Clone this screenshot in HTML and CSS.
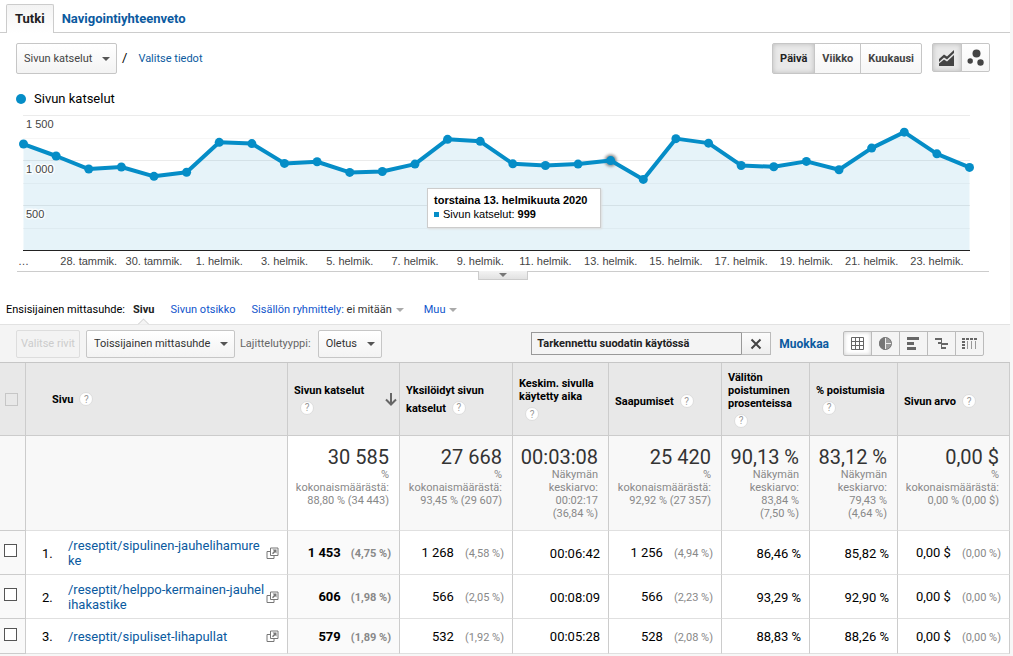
FILE: index.html
```html
<!DOCTYPE html>
<html lang="fi">
<head>
<meta charset="utf-8">
<title>Sivut – Tutki</title>
<meta name="viewport" content="width=device-width, initial-scale=1">
<link rel="stylesheet" href="styles.css">
</head>
<body>
<svg class="symbols" aria-hidden="true">
  <symbol id="popout" viewBox="0 0 13 13">
    <path d="M4.500 4.500H1V11.500H8V8.500" fill="none" stroke="#777" stroke-linejoin="round"/>
    <path d="M4.500 1H12V8.500H4.500Z" fill="#fff" stroke="#777" stroke-linejoin="round"/>
    <path d="M6.500 2.500H10.500V6.500L9.200 5.200L7 7.200L6 6.200L8 4Z" fill="#777"/>
  </symbol>
</svg>
<main class="panel">
  <nav class="tabs">
    <a class="tab tab-active" href="#tutki">Tutki</a>
    <a class="tab" href="#navigointi">Navigointiyhteenveto</a>
  </nav>

  <section class="controls">
    <span class="select select-tall"><select aria-label="Tieto"><option>Sivun katselut</option></select></span>
    <span class="slash">/</span>
    <a class="pick" href="#tiedot">Valitse tiedot</a>
    <div class="group periods">
      <button class="on" type="button">Päivä</button><button type="button">Viikko</button><button type="button">Kuukausi</button>
    </div>
    <div class="group charts">
      <button class="on" type="button" aria-label="Viivakaavio">
        <svg width="16" height="16" viewBox="0 0 16 16"><path d="M0 9L5 4.500L8 6.500L15 0V3L8 9.500L5 7.500L0 12Z" fill="#444"/><path d="M0 16V13.500L5 9.500L8 11.500L15 5V16Z" fill="#444"/></svg>
      </button><button type="button" aria-label="Liikekaavio">
        <svg width="18" height="17" viewBox="0 0 18 17"><circle cx="9.500" cy="4.500" r="4" fill="#444"/><circle cx="3.200" cy="12" r="2.700" fill="#444"/><circle cx="13.500" cy="13.500" r="3.200" fill="#444"/></svg>
      </button>
    </div>
  </section>

  <div class="legend"><i class="dot"></i>Sivun katselut</div>

  <section class="chart">
    <svg viewBox="0 110 1010 162" role="img" aria-label="Sivun katselut päivittäin">
      <defs><filter id="glow" x="-100%" y="-100%" width="300%" height="300%"><feGaussianBlur stdDeviation="1.500"/></filter></defs>
      <g stroke="#ebebeb"><path d="M23 115.500H970M23 160.500H970M23 205.500H970"/></g>
      <g stroke="#f6f6f6"><path d="M23 138.500H970M23 183.500H970M23 228.500H970"/></g>
      <g id="series"></g>
      <path d="M23 250.500H970" stroke="#222"/>
      <path d="M17 271.500H989" stroke="#ccc"/>
      <g class="scale"><text x="26" y="128">1 500</text><text x="26" y="173">1 000</text><text x="26" y="218">500</text></g>
      <g class="dates" id="dates"></g>
    </svg>
    <div class="tip" role="tooltip"><b>torstaina 13. helmikuuta 2020</b><span><i class="square"></i>Sivun katselut: <b>999</b></span></div>
    <button class="handle" type="button" aria-label="Pienennä kaavio"></button>
  </section>

  <section class="dimensions">
    <span>Ensisijainen mittasuhde:</span>
    <b class="current">Sivu</b>
    <a href="#otsikko">Sivun otsikko</a>
    <span class="grouping"><a href="#ryhmittely">Sisällön ryhmittely:</a> <span class="caret">ei mitään</span></span>
    <a class="caret" href="#muu">Muu</a>
  </section>

  <section class="toolbar">
    <button class="rows-button" type="button" disabled>Valitse rivit</button>
    <span class="select"><select aria-label="Toissijainen mittasuhde"><option>Toissijainen mittasuhde</option></select></span>
    <label class="sort-label" for="sort">Lajittelutyyppi:</label>
    <span class="select"><select id="sort"><option>Oletus</option></select></span>
    <div class="filter">
      <input type="text" aria-label="Suodatin" value="Tarkennettu suodatin käytössä">
      <button type="button" aria-label="Poista suodatin"><svg width="12" height="12" viewBox="0 0 12 12"><path d="M1.500 1.500L10.500 10.500M10.500 1.500L1.500 10.500" stroke="#444" stroke-width="2"/></svg></button>
    </div>
    <a class="edit" href="#muokkaa">Muokkaa</a>
    <div class="group views">
      <button class="on" type="button" aria-label="Taulukko"><svg width="13" height="13" viewBox="0 0 13 13"><path d="M.5 .5H12.500V12.500H.5ZM.5 4.500H12.500M.5 8.500H12.500M4.500 .5V12.500M8.500 .5V12.500" fill="none" stroke="#666"/></svg></button><button type="button" aria-label="Prosenttiosuus"><svg width="13" height="13" viewBox="0 0 13 13"><circle cx="6.500" cy="6.500" r="6" fill="#999" stroke="#777"/><path d="M6.500 0A6.500 6.500 0 0 0 6.500 13Z" fill="#777"/><path d="M6.500 1V12M7 6.500H12" stroke="#eee"/></svg></button><button type="button" aria-label="Tehokkuus"><svg width="13" height="13" viewBox="0 0 13 13"><path d="M0 1.500H12M0 6.500H7M0 11.500H9" stroke="#666" stroke-width="3"/></svg></button><button type="button" aria-label="Vertailu"><svg width="13" height="13" viewBox="0 0 13 13"><path d="M0 2H6M3 6H6M6 7H13M6 11H11" stroke="#666" stroke-width="2"/><path d="M6.500 1V12" stroke="#666"/></svg></button><button type="button" aria-label="Pivot"><svg width="15" height="13" viewBox="0 0 15 13"><path d="M0 2H15" stroke="#666" stroke-width="2" stroke-dasharray="3 1"/><path d="M0 5H3M0 8H3M0 11H3" stroke="#666" stroke-width="2"/><path d="M5.500 4V12M9.500 4V12M13.500 4V12" stroke="#999"/></svg></button>
    </div>
  </section>

  <table class="report">
    <colgroup><col class="c-check"><col><col class="c-views"><col class="c-wide"><col class="c-time"><col class="c-wide"><col class="c-rate"><col class="c-rate"><col class="c-views"></colgroup>
    <thead>
      <tr>
        <th class="check"><input type="checkbox" aria-label="Valitse kaikki" disabled></th>
        <th class="page">Sivu<i class="help">?</i></th>
        <th class="sorted"><div class="sort-head"><span>Sivun katselut<wbr><i class="help">?</i></span><svg width="12" height="13" viewBox="0 0 12 13"><path d="M6 0V11.500M1 6.500L6 11.500L11 6.500" fill="none" stroke="#666" stroke-width="2"/></svg></div></th>
        <th>Yksilöidyt sivun katselut<i class="help">?</i></th>
        <th>Keskim. sivulla käytetty aika<wbr><i class="help">?</i></th>
        <th>Saapumiset<i class="help">?</i></th>
        <th>Välitön poistuminen prosenteissa<wbr><i class="help">?</i></th>
        <th>% poistumisia<wbr><i class="help">?</i></th>
        <th>Sivun arvo<i class="help">?</i></th>
      </tr>
    </thead>
    <tbody>
      <tr class="totals">
        <td class="check"></td>
        <td></td>
        <td class="sorted"><strong>30 585</strong>% kokonaismäärästä: 88,80&nbsp;% (34&nbsp;443)</td>
        <td><strong>27 668</strong>% kokonaismäärästä: 93,45&nbsp;% (29&nbsp;607)</td>
        <td><strong>00:03:08</strong>Näkymän keskiarvo: 00:02:17 (36,84&nbsp;%)</td>
        <td><strong>25 420</strong>% kokonaismäärästä: 92,92&nbsp;% (27&nbsp;357)</td>
        <td><strong>90,13 %</strong>Näkymän keskiarvo: 83,84&nbsp;% (7,50&nbsp;%)</td>
        <td><strong>83,12 %</strong>Näkymän keskiarvo: 79,43&nbsp;% (4,64&nbsp;%)</td>
        <td><strong>0,00 $</strong>% kokonaismäärästä: 0,00&nbsp;% (0,00&nbsp;$)</td>
      </tr>
      <tr>
        <td class="check"><input type="checkbox" aria-label="Valitse rivi 1"></td>
        <td class="page"><div class="entry"><span>1.</span><a href="#r1">/reseptit/sipulinen-jauhelihamureke</a><svg class="popout" width="13" height="13"><use href="#popout"/></svg></div></td>
        <td class="sorted">1 453<small>(4,75 %)</small></td><td>1 268<small>(4,58 %)</small></td><td>00:06:42</td><td>1 256<small>(4,94 %)</small></td><td>86,46 %</td><td>85,82 %</td><td>0,00 $<small>(0,00 %)</small></td>
      </tr>
      <tr>
        <td class="check"><input type="checkbox" aria-label="Valitse rivi 2"></td>
        <td class="page"><div class="entry"><span>2.</span><a href="#r2">/reseptit/helppo-kermainen-jauhelihakastike</a><svg class="popout" width="13" height="13"><use href="#popout"/></svg></div></td>
        <td class="sorted">606<small>(1,98 %)</small></td><td>566<small>(2,05 %)</small></td><td>00:08:09</td><td>566<small>(2,23 %)</small></td><td>93,29 %</td><td>92,90 %</td><td>0,00 $<small>(0,00 %)</small></td>
      </tr>
      <tr>
        <td class="check"><input type="checkbox" aria-label="Valitse rivi 3"></td>
        <td class="page"><div class="entry"><span>3.</span><a href="#r3">/reseptit/sipuliset-lihapullat</a><svg class="popout" width="13" height="13"><use href="#popout"/></svg></div></td>
        <td class="sorted">579<small>(1,89 %)</small></td><td>532<small>(1,92 %)</small></td><td>00:05:28</td><td>528<small>(2,08 %)</small></td><td>88,83 %</td><td>88,26 %</td><td>0,00 $<small>(0,00 %)</small></td>
      </tr>
    </tbody>
  </table>
</main>
<script src="chart.js"></script>
</body>
</html>
```

FILE: chart.js
```js
// Daily page views from 26 January to 24 February.
const views = [1183, 1050, 905, 928, 824, 870, 1202, 1188, 968, 986, 868, 878, 960, 1235, 1213, 963, 945, 960, 999, 790, 1243, 1193, 945, 930, 990, 897, 1138, 1315, 1074, 923];
const left = 23.5;
const base = 250.5;
const step = 946 / (views.length - 1);
const hovered = 18;
const points = views.map((v, i) => [left + i * step, base - v * 0.09]);
const line = points.map(p => p.join(' ')).join(' L');
const last = points[points.length - 1][0];
const dots = points.map(([x, y]) => `<circle cx="${x}" cy="${y}" r="4.5"/>`).join('');
const [hx, hy] = points[hovered];

document.getElementById('series').innerHTML =
  `<path d="M${left} ${base} L${line} L${last} ${base}Z" fill="#058dc7" fill-opacity=".1"/>` +
  `<circle cx="${hx}" cy="${hy}" r="6" fill="#555" opacity=".7" filter="url(#glow)"/>` +
  `<path d="M${line}" fill="none" stroke="#058dc7" stroke-width="4" stroke-linejoin="round"/>` +
  `<g fill="#058dc7">${dots}</g>`;

const labels = ['…', '28. tammik.', '30. tammik.'];
for (let day = 1; day <= 23; day += 2) labels.push(`${day}. helmik.`);
document.getElementById('dates').innerHTML =
  labels.map((t, i) => `<text x="${left + i * 2 * step}" y="265">${t}</text>`).join('');
```

FILE: styles.css
```css
* { box-sizing: border-box; }

body {
  margin: 0;
  background: #f7f7f7;
  color: #000;
  font: 11px/16px Roboto, "Liberation Sans", sans-serif;
}

button, input, select { margin: 0; font: inherit; color: inherit; }
a { color: #15c; text-decoration: none; }
.symbols { display: none; }

.panel { margin-right: 3px; background: #fff; }

/* Tabs */
.tabs {
  display: flex;
  padding: 4px 6px 0;
  border-bottom: 1px solid #ccc;
}
.tab {
  height: 28px;
  padding: 7px 8px 0;
  font-size: 13px;
  font-weight: 700;
  color: #0b5aa0;
}
.tab-active {
  height: 29px;
  margin-bottom: -1px;
  border: 1px solid #ccc;
  border-bottom: 0;
  border-radius: 2px 2px 0 0;
  padding-top: 6px;
  background: linear-gradient(#f3f3f3, #fff);
  color: #222;
}

/* Buttons and drop-downs */
.select { position: relative; display: inline-flex; }
.select select {
  appearance: none;
  height: 28px;
  padding: 0 23px 0 7px;
  border: 1px solid #c6c6c6;
  border-radius: 2px;
  background: linear-gradient(#fff, #f3f3f3);
  color: #333;
}
.select::after {
  content: "";
  position: absolute;
  right: 7px;
  top: 50%;
  margin-top: -2px;
  border: 4px solid transparent;
  border-top-color: #555;
  border-bottom: 0;
}
.select-tall select { height: 31px; color: #444; }

.group { display: flex; }
.group button {
  display: flex;
  align-items: center;
  justify-content: center;
  padding: 0 7px;
  border: 1px solid #c6c6c6;
  background: linear-gradient(#fff, #f6f6f6);
  color: #444;
  font-weight: 700;
}
.group button + button { margin-left: -1px; }
.group button:first-child { border-radius: 2px 0 0 2px; }
.group button:last-child { border-radius: 0 2px 2px 0; }
.group .on {
  background: #e9e9e9;
  box-shadow: inset 0 0 5px #bbb;
  color: #222;
}

.controls {
  display: flex;
  align-items: flex-start;
  padding: 10px 20px 0 16px;
}
.slash { margin: 7px 11px 0 5px; font-size: 13px; }
.pick { margin-top: 8px; color: #0b5aa0; }
.periods { margin-left: auto; }
.periods button { height: 31px; }
.charts { margin-left: 10px; }
.charts button { width: 29px; height: 29px; padding: 0; }
.charts .on { width: 30px; }

/* Chart */
.legend {
  display: flex;
  align-items: center;
  gap: 8px;
  margin-top: 17px;
  padding-left: 16px;
  font-size: 13px;
}
.dot { width: 10px; height: 10px; border-radius: 50%; background: #058dc7; }
.chart {
  position: relative;
  margin-top: 3px;
  font-family: "Liberation Sans", Arial, sans-serif;
}
.chart > svg { display: block; width: 100%; height: auto; }
.chart text { font-size: 11px; fill: #444; }
.scale text { stroke: #fff; stroke-width: 3px; stroke-opacity: .8; paint-order: stroke; }
.dates { text-anchor: middle; }
.tip {
  position: absolute;
  left: 427px;
  top: 78px;
  min-width: 174px;
  padding: 4px 6px 6px;
  border: 1px solid #ccc;
  background: #fff;
  box-shadow: 1px 1px 2px #ddd;
  line-height: 14px;
  white-space: nowrap;
}
.tip > b, .tip > span { display: block; }
.square { display: inline-block; width: 5px; height: 5px; margin-right: 4px; vertical-align: 1px; background: #058dc7; }
.handle {
  position: absolute;
  left: 478px;
  top: 161px;
  width: 50px;
  height: 9px;
  padding: 0;
  border: 1px solid #ccc;
  border-top: 0;
  background: linear-gradient(#f3f3f3, #e2e2e2);
}
.handle::after {
  content: "";
  display: block;
  width: 0;
  margin: 0 auto;
  border: 4px solid transparent;
  border-top-color: #777;
  border-bottom: 0;
}

/* Dimensions */
.dimensions { display: flex; padding: 30px 6px 6px; }
.current { position: relative; margin: 0 16px 0 8px; color: #222; }
.current::after {
  content: "";
  position: absolute;
  left: 6px;
  bottom: -11px;
  width: 8px;
  height: 8px;
  border: 1px solid #ccc;
  border-right: 0;
  border-bottom: 0;
  background: #f4f4f4;
  transform: rotate(45deg);
  clip-path: polygon(0 0, 100% 0, 0 100%);
}
.grouping { margin: 0 20px 0 16px; color: #333; }
.caret::after {
  content: "";
  display: inline-block;
  margin-left: 4px;
  vertical-align: 1px;
  border: 4px solid transparent;
  border-top-color: #aaa;
  border-bottom: 0;
}

/* Toolbar */
.toolbar {
  display: flex;
  align-items: center;
  height: 38px;
  padding: 0 26px 0 16px;
  border-top: 1px solid #e2e2e2;
  background: #f4f4f4;
}
.rows-button {
  height: 28px;
  margin-right: 6px;
  padding: 0 4px;
  border: 1px solid #ddd;
  border-radius: 2px;
  background: #f3f3f3;
  color: #ccc;
}
.sort-label { margin: 0 7px 0 5px; color: #666; }
.filter { display: flex; width: 240px; height: 23px; margin-left: auto; }
.filter input {
  flex: 1;
  min-width: 0;
  padding: 0 5px;
  border: 1px solid #999;
  border-radius: 0;
  background: #f4f4f4;
  color: #222;
  font-weight: 700;
}
.filter button {
  display: flex;
  align-items: center;
  justify-content: center;
  width: 30px;
  margin-left: -1px;
  padding: 0;
  border: 1px solid #bbb;
  border-left-color: #999;
  background: linear-gradient(#fcfcfc, #eee);
}
.edit { margin: 0 14px 0 8px; font-size: 12px; font-weight: 700; color: #0b5aa0; }
.views button { width: 29px; height: 25px; padding: 0; border-color: #bbb; background: #f4f4f4; }
.views .on { background: #fff; box-shadow: inset 0 0 4px #ccc; }

/* Report table */
.report {
  width: 100%;
  table-layout: fixed;
  border-collapse: separate;
  border-spacing: 0;
  border-top: 1px solid #c6c6c6;
}
.c-check { width: 26px; }
.c-views { width: 112px; }
.c-wide { width: 113px; }
.c-time { width: 96px; }
.c-rate { width: 88px; }

.report th {
  height: 73px;
  padding: 0 6px;
  border-right: 1px solid #ccc;
  border-bottom: 1px solid #ccc;
  background: #e8e8e8;
  line-height: 13px;
  text-align: left;
}
.report th.page { padding: 0 6px 4px 26px; }
.sort-head { display: flex; align-items: center; justify-content: space-between; margin-right: -4px; }
.sort-head span { width: 80px; }
.sort-head svg { flex: none; }
.help {
  display: inline-flex;
  align-items: center;
  justify-content: center;
  width: 14px;
  height: 14px;
  margin: 4px 0 0 6px;
  border: 1px solid #ddd;
  border-radius: 50%;
  vertical-align: baseline;
  background: #fff;
  color: #999;
  font-size: 10px;
  font-style: normal;
  font-weight: 400;
}

.report td {
  height: 35px;
  padding: 7px 8px 6px 0;
  border-right: 1px solid #ccc;
  border-bottom: 1px solid #e0e0e0;
  font-size: 13px;
  line-height: 15px;
  text-align: right;
  white-space: nowrap;
}
.report .sorted { font-weight: 700; }
.report td.sorted { background: #fafafa; }
.report small { margin-left: 11px; font-size: 11px; color: #888; }
.report .sorted small { margin-left: 10px; }
.report .check { padding: 0 0 0 4px; text-align: left; }
.report td.check { background: #f9f9f9; border-bottom-color: #ccc; }
.check input {
  display: block;
  appearance: none;
  width: 13px;
  height: 13px;
  margin-top: -4px;
  border: 1px solid #555;
  background: #fff;
}
.check input:disabled { margin: 0 1px; border-color: #c6c6c6; background: none; }

.report .totals td {
  height: 95px;
  padding: 10px 10px 0 6px;
  background: #f8f8f8;
  color: #888;
  font-size: 11px;
  font-weight: 400;
  line-height: 13px;
  vertical-align: top;
  white-space: normal;
}
.report .totals .sorted { background: #fff; }
.totals strong {
  display: block;
  color: #333;
  font-size: 20px;
  font-weight: 400;
  line-height: 22px;
  white-space: nowrap;
}

.entry { display: flex; align-items: center; padding-left: 16px; text-align: left; }
.entry span { width: 26px; flex: none; }
.entry a {
  flex: 1;
  min-width: 0;
  color: #0b5aa0;
  white-space: normal;
  word-break: break-all;
}
.popout { flex: none; }
```
